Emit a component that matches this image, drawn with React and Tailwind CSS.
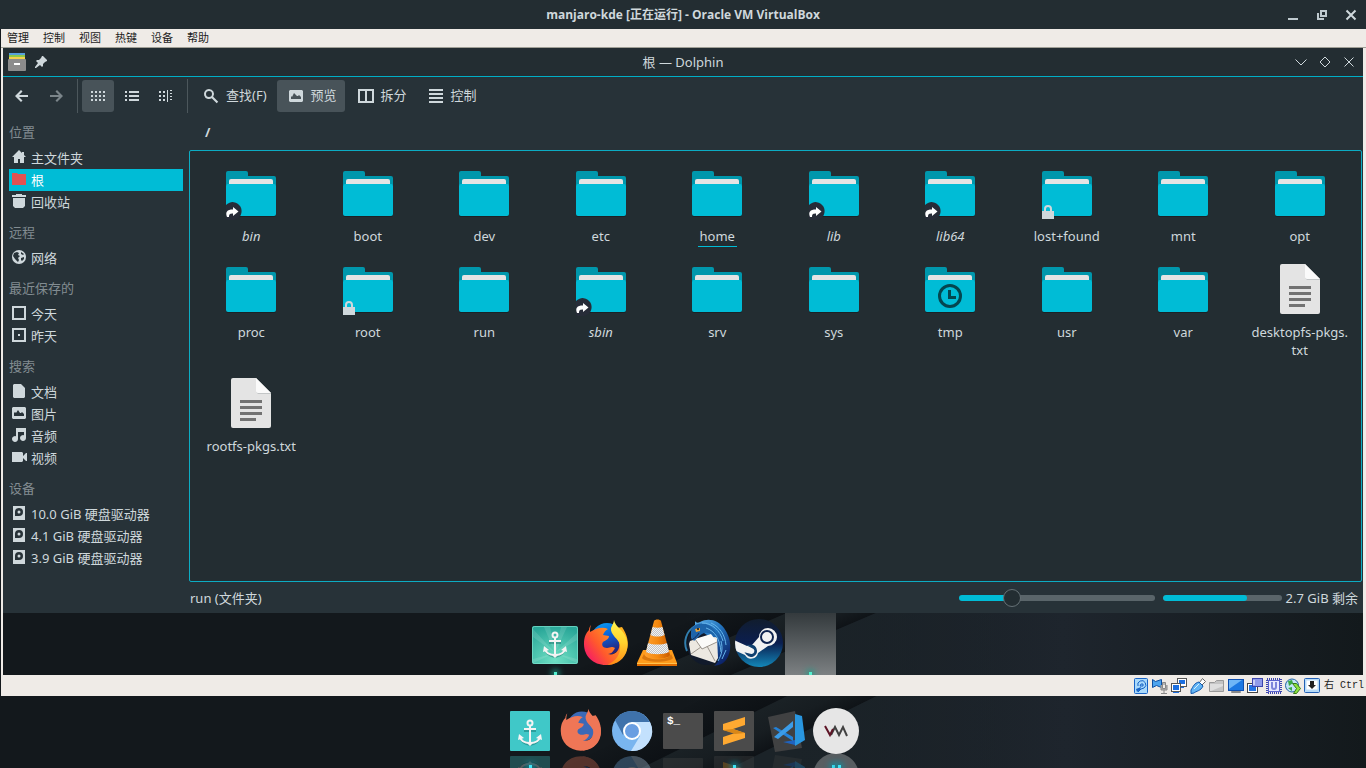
import { useState } from "react";

const folders = [
  { name: "bin", link: true },
  { name: "boot" },
  { name: "dev" },
  { name: "etc" },
  { name: "home", current: true },
  { name: "lib", link: true },
  { name: "lib64", link: true },
  { name: "lost+found", locked: true },
  { name: "mnt" },
  { name: "opt" },
  { name: "proc" },
  { name: "root", locked: true },
  { name: "run" },
  { name: "sbin", link: true },
  { name: "srv" },
  { name: "sys" },
  { name: "tmp", clock: true },
  { name: "usr" },
  { name: "var" },
  { name: "desktopfs-pkgs.txt", file: true },
  { name: "rootfs-pkgs.txt", file: true },
];

const places = [
  {
    title: "位置",
    items: [
      { label: "主文件夹", icon: "home" },
      { label: "根", icon: "root", active: true },
      { label: "回收站", icon: "trash" },
    ],
  },
  { title: "远程", items: [{ label: "网络", icon: "globe" }] },
  {
    title: "最近保存的",
    items: [
      { label: "今天", icon: "today" },
      { label: "昨天", icon: "yesterday" },
    ],
  },
  {
    title: "搜索",
    items: [
      { label: "文档", icon: "document" },
      { label: "图片", icon: "image" },
      { label: "音频", icon: "audio" },
      { label: "视频", icon: "video" },
    ],
  },
  {
    title: "设备",
    items: [
      { label: "10.0 GiB 硬盘驱动器", icon: "disk" },
      { label: "4.1 GiB 硬盘驱动器", icon: "disk" },
      { label: "3.9 GiB 硬盘驱动器", icon: "disk" },
    ],
  },
];

const placeIcons = {
  home: <path d="M8 1L1 8h2v6h4v-4h2v4h4V8h2L13 6V3h-2v1z" />,
  root: <path fill="#e25252" d="M1 2h5l1 1h8v11H1z" />,
  trash: <path d="M5 1h6v1h4v2H1V2h4zM2 5h12v8l-2 2H4l-2-2z" />,
  globe: (
    <>
      <circle cx="8" cy="8" r="7" />
      <path
        fill="#273238"
        d="M3 4l3-1 2 1-1 2 2 1-2 2 1 2-1 2-3-3-2-3zM10 3l3 2-1 1-2-1zM10 9l3-1v2l-2 2-1-1z"
      />
    </>
  ),
  today: <path fillRule="evenodd" d="M1 1h14v14H1zM3 3v10h10V3z" />,
  yesterday: <path fillRule="evenodd" d="M1 1h14v14H1zM3 3v10h10V3zM7 7h2v2H7z" />,
  document: <path d="M2 2l1-1h7l4 4v9l-1 1H3l-1-1z" />,
  image: (
    <path
      fillRule="evenodd"
      d="M2 2h12l1 1v10l-1 1H2l-1-1V3zM3 11h10V9l-2-2-1 1-1 0-2-3-2 3-1-1-1 1z"
    />
  ),
  audio: <path d="M5 1h10v10a3 3 0 1 1-2-2.8V5H7v7a3 3 0 1 1-2-2.8z" />,
  video: <path d="M1 3h10l1 1v3l3-3h1v8h-1l-3-3v3l-1 1H1z" />,
  disk: (
    <path
      fillRule="evenodd"
      d="M2 1h12v14H2zM8 3a4 4 0 0 0-4 4v4h4a4 4 0 0 0 0-8zM8 5.500a1.500 1.500 0 1 1 0 3 1.500 1.500 0 0 1 0-3z"
    />
  ),
};

function FolderIcon({ link, locked, clock }) {
  return (
    <svg viewBox="0 0 64 64" className="h-16 w-16" aria-hidden="true">
      <path fill="#0097ac" d="M7 12a2 2 0 0 1 2-2h18a2 2 0 0 1 2 2v3h26a2 2 0 0 1 2 2v20H7z" />
      <path fill="#e4e4e4" d="M10 20a2 2 0 0 1 2-2h40a2 2 0 0 1 2 2v8H10z" />
      <rect x="7" y="24" width="50" height="32" rx="2" fill="#1a2226" />
      <rect x="7" y="23" width="50" height="32" rx="2" fill="#00bcd6" />
      {clock && (
        <>
          <circle cx="32" cy="39" r="10.500" fill="none" stroke="#04464f" strokeWidth="3" />
          <path d="M31.500 33v7.500H38" fill="none" stroke="#04464f" strokeWidth="3" />
        </>
      )}
      {link && (
        <>
          <path fill="#272c38" d="M7 44a9 9 0 1 1 8 15H9l-2-1z" />
          <path
            fill="#fff"
            d="M14 46l5.500 4.500L14 55v-2.500c-3 0-4 .5-4 3.500H8c-2-5 0-7.500 6-7.500z"
          />
        </>
      )}
      {locked && (
        <path
          fill="#cfd8dc"
          fillRule="evenodd"
          d="M7 50h2v-2a4 4 0 0 1 8 0v2h2v8H7zM11 50h4v-2a2 2 0 0 0-4 0z"
        />
      )}
    </svg>
  );
}

function TextFileIcon() {
  return (
    <svg viewBox="0 0 64 64" className="h-16 w-16" aria-hidden="true">
      <path fill="#e4e4e4" d="M12 9a2 2 0 0 1 2-2h23l15 15v33a2 2 0 0 1-2 2H14a2 2 0 0 1-2-2z" />
      <path fill="#c3c6c7" d="M37 21l2 2h13v-1z" />
      <path fill="#fafafa" d="M37 7l15 15H39a2 2 0 0 1-2-2z" />
      <path fill="#727272" d="M21 29h22v3H21zM21 35h22v3H21zM21 41h22v3H21zM21 47h16v3H21z" />
    </svg>
  );
}

function Anchor({ x, y }) {
  return (
    <g transform={`translate(${x} ${y})`}>
      <path
        fill="none"
        stroke="#0b5e5a"
        strokeOpacity=".4"
        strokeWidth="2"
        d="M0 -5v18M-6 0h12M-10 6c1 5 5 7 10 8c5-1 9-3 10-8"
      />
      <circle cy="-8" r="2.500" fill="none" stroke="#f4f4f4" strokeWidth="2" />
      <path fill="none" stroke="#f4f4f4" strokeWidth="2" d="M0 -5v17M-6 -2h12M-10 6c1 4 5 6 10 6c5 0 9-2 10-6" />
      <path fill="#f4f4f4" d="M-12 9l1-6 5 4zM12 9l-1-6-5 4zM-3 12h6l-3 3z" />
    </g>
  );
}

function FirefoxShape({ body, flame, globe }) {
  return (
    <>
      <circle cx="26" cy="22" r="16" fill={globe} />
      <path
        fill={body}
        d="M10 8C9 11 9 13 9 15C14 12 21 9 27 12C25 13 23 15 22 18L28 19C28 22 25 23 22 25C20 28 22 31 26 31C29 31 30 29 34 31C33 33 31 37 27 37C33 39 40 34 38 25C37 20 32 18 31 12L41 10C46 17 48 25 46 32C43 42 35 48 25 48C12 48 3 39 3 27C3 20 5 16 8 13C8 11 9 9 10 8z"
      />
      <path
        fill={flame}
        d="M33 3C34 7 36 9 41 14C47 21 48 29 45 36C41 45 32 48 26 48C36 44 40 36 39 28C38 22 29 18 30 11C31 8 33 6 33 3z"
      />
    </>
  );
}

function GuestAnchor() {
  return (
    <svg viewBox="0 0 51 51" className="h-[51px] w-[51px]" aria-hidden="true">
      <defs>
        <radialGradient id="guest-anchor" cx=".5" cy=".9" r=".9">
          <stop offset="0" stopColor="#6fe0c4" />
          <stop offset="1" stopColor="#29a698" />
        </radialGradient>
      </defs>
      <rect x="2" y="9" width="46" height="38" rx="2" fill="url(#guest-anchor)" />
      <path
        fill="#fff"
        fillOpacity=".12"
        d="M25 36L3 12v8zM25 36L14 10h6zM25 36L31 10h6zM25 36L47 16v7zM25 36L3 42v4zM25 36l22 6v4z"
      />
      <rect x="2.500" y="9.500" width="45" height="37" rx="2" fill="none" stroke="#7fe3cf" strokeOpacity=".7" />
      <Anchor x={25} y={26} />
    </svg>
  );
}

function GuestFirefox() {
  return (
    <svg viewBox="0 0 51 51" className="h-[51px] w-[51px]" aria-hidden="true">
      <defs>
        <linearGradient id="fox-body" x1="0" y1=".8" x2=".9" y2=".2">
          <stop offset="0" stopColor="#f5156c" />
          <stop offset=".4" stopColor="#ff5a2c" />
          <stop offset="1" stopColor="#ffb01f" />
        </linearGradient>
        <linearGradient id="fox-flame" x1="0" y1="0" x2="0" y2="1">
          <stop offset="0" stopColor="#fff44f" />
          <stop offset=".5" stopColor="#ffd22e" />
          <stop offset="1" stopColor="#ff8a16" />
        </linearGradient>
        <linearGradient id="fox-globe" x1="0" y1="0" x2=".3" y2="1">
          <stop offset="0" stopColor="#0aa5f5" />
          <stop offset=".5" stopColor="#0a5fd8" />
          <stop offset="1" stopColor="#27247b" />
        </linearGradient>
      </defs>
      <FirefoxShape body="url(#fox-body)" flame="url(#fox-flame)" globe="url(#fox-globe)" />
    </svg>
  );
}

function GuestVlc() {
  return (
    <svg viewBox="0 0 51 51" className="h-[51px] w-[51px]" aria-hidden="true">
      <defs>
        <linearGradient id="vlc-orange">
          <stop offset="0" stopColor="#ffa030" />
          <stop offset=".5" stopColor="#f58a10" />
          <stop offset="1" stopColor="#c85a00" />
        </linearGradient>
        <pattern id="vlc-check" width="2" height="2" patternUnits="userSpaceOnUse">
          <rect width="2" height="2" fill="#f3f3f3" />
          <path fill="#c2c4c6" d="M0 0h1v1H0zM1 1h1v1H1z" />
        </pattern>
      </defs>
      <path fill="#ff9c1c" d="M11 33h29l5 13H5z" />
      <path fill="#ffc24d" d="M5 46h40v1H5z" />
      <path fill="#e06c00" d="M5 47h40v2H5z" />
      <path fill="#b85400" fillOpacity=".5" d="M12 37c2 7 25 7 27 0l2 4c-4 5-27 5-31 0z" />
      <path fill="url(#vlc-orange)" d="M22 4c1-2 6-2 7 0l9 34c-2 5-23 5-25 0z" />
      <path fill="url(#vlc-check)" d="M20.500 10c3 1 7 1 10 0l2 8c-4 2-10 2-14 0zM16 26c5 2 14 2 19 0l2 9c-6 3-17 3-23 0z" />
    </svg>
  );
}

function GuestThunderbird() {
  return (
    <svg viewBox="0 0 51 51" className="h-[51px] w-[51px]" aria-hidden="true">
      <defs>
        <linearGradient id="bird" x1="0" y1="0" x2=".7" y2="1">
          <stop offset="0" stopColor="#63b6ef" />
          <stop offset=".45" stopColor="#2273bd" />
          <stop offset="1" stopColor="#0c2369" />
        </linearGradient>
      </defs>
      <circle cx="24" cy="28" r="20" fill="#111a2b" />
      <path fill="none" stroke="#317eae" strokeWidth="2" d="M12 9C3 14 0 25 4 34" />
      <path
        fill="url(#bird)"
        d="M12 4c1 2 3 2 5 1C26 0 36 4 41 11c8 11 8 24 2 32c-3 4-7 5-12 6c3-3 5-5 5-8l-6 4c4-8 5-15 3-21l-15-10c-5 1-7 5-9 9c-2-6 0-12 3-15z"
      />
      <path fill="#ece8e1" d="M7 24l9-3 18-1 1 21-3 5L8 38l-2-11z" />
      <path fill="#fbfaf8" d="M12 22l16-5 6 8-15 7z" />
      <path fill="none" stroke="#9b948c" strokeWidth="1" d="M12 22l7 10 15-7M8 37l10-7M32 44l-8-15" />
      <path fill="#1d64aa" d="M9 11c5-6 15-6 22 1l5 11c-6-6-12-9-17-6c-3 2-5 4-8 7c-3-4-4-8-2-13z" />
      <path
        fill="none"
        stroke="#66b4ea"
        strokeWidth="1"
        d="M19 6c10 0 18 7 21 18M28 6c9 4 14 12 15 22M23 11c9 3 14 11 15 24M43 33l-4 9M38 24c2 8 1 13-3 20"
      />
      <path fill="#e7a33c" d="M12 12l5-1 0 3-4 1z" />
      <circle cx="15" cy="12" r="1" fill="#111" />
      <path fill="none" stroke="#172653" strokeWidth="1" d="M10 22c2-1 4-3 6-6" />
    </svg>
  );
}

function GuestSteam() {
  return (
    <svg viewBox="0 0 51 51" className="h-[51px] w-[51px]" aria-hidden="true">
      <defs>
        <linearGradient id="steam" x1="0" y1="0" x2="0" y2="1">
          <stop offset="0" stopColor="#111d2e" />
          <stop offset=".5" stopColor="#0b1e4f" />
          <stop offset="1" stopColor="#1387b8" />
        </linearGradient>
        <clipPath id="steam-clip">
          <circle cx="25" cy="26" r="24" />
        </clipPath>
      </defs>
      <circle cx="25" cy="26" r="24" fill="url(#steam)" />
      <g clipPath="url(#steam-clip)">
        <path fill="#f2f2f2" d="M0 23l13 6c2-1 4-1 5-1l7-8a9 9 0 1 1 9 9l-10 7a7 7 0 0 1-13 2L0 33z" />
        <circle cx="33" cy="20" r="6" fill="none" stroke="#10244f" strokeWidth="2" />
        <path fill="none" stroke="#10406f" strokeWidth="2" d="M13 37a5 5 0 1 0 3-8l4 2a4 4 0 0 1-3 7z" />
      </g>
    </svg>
  );
}

function HostAnchor() {
  return (
    <svg viewBox="0 0 51 51" className="h-[51px] w-[51px]" aria-hidden="true">
      <rect x="6" y="5" width="40" height="40" rx="1" fill="#40c8c8" />
      <Anchor x={26} y={25} />
    </svg>
  );
}

function HostFirefox() {
  return (
    <svg viewBox="0 0 51 51" className="h-[51px] w-[51px]" aria-hidden="true">
      <g transform="translate(3 0) scale(.92 .93)">
        <FirefoxShape body="#ef7656" flame="#ef7656" globe="#3b69b7" />
      </g>
    </svg>
  );
}

function HostChromium() {
  return (
    <svg viewBox="0 0 51 51" className="h-[51px] w-[51px]" aria-hidden="true">
      <circle cx="26" cy="25" r="20" fill="#79b5ef" />
      <path fill="#3f72ab" d="M9 14a20 20 0 0 1 34 1l1 1H26l-9 13z" />
      <path fill="#c3e1fd" d="M26 16h18a20 20 0 0 1-19 29l9-15z" />
      <circle cx="26" cy="25" r="9" fill="#fff" />
      <circle cx="26" cy="25" r="7" fill="#699ee2" />
    </svg>
  );
}

function HostTerminal({ prompt }) {
  return (
    <svg viewBox="0 0 51 51" className="h-[51px] w-[51px]" aria-hidden="true">
      <rect x="6" y="7" width="40" height="36" rx="1" fill="#4b4b4b" />
      {prompt && (
        <text x="10" y="18" fontSize="11" fontWeight="700" fill="#fff" fontFamily="Liberation Mono, monospace">
          {prompt}
        </text>
      )}
    </svg>
  );
}

function HostSublime() {
  return (
    <svg viewBox="0 0 51 51" className="h-[51px] w-[51px]" aria-hidden="true">
      <rect x="6" y="5" width="40" height="40" rx="1" fill="#4b4b4b" />
      <path fill="#ffa931" d="M15 18l22-7v8l-12 4 12 4v5l-22 7v-8l12-4-12-3z" />
      <path fill="#d98718" d="M15 24l10-1 12 4-10 1z" />
    </svg>
  );
}

function HostCode() {
  return (
    <svg viewBox="0 0 51 51" className="h-[51px] w-[51px]" aria-hidden="true">
      <path fill="#404142" d="M9 11l27-6 7 37-27 4z" />
      <path fill="#2996df" d="M36 8l7 2 3 24-10 6z" />
      <path fill="#1f63c0" d="M24 36l12-2v5z" />
      <path fill="#2382d8" d="M14 22l3-1 17 10v4z" />
      <path fill="#3b9ce8" d="M34 15v6L19 33l-4-2z" />
    </svg>
  );
}

function HostVm() {
  return (
    <svg viewBox="0 0 51 51" className="h-[51px] w-[51px]" aria-hidden="true">
      <circle cx="26" cy="25" r="23" fill="#e6e6e6" />
      <path fill="none" stroke="#414141" strokeWidth="2" d="M21 29l4-8 4 8 4-8 4 9" />
      <path fill="none" stroke="#5e1426" strokeWidth="2" d="M15 20l5 9 3-6" />
    </svg>
  );
}

const guestDock = [
  { name: "Manjaro Hello", icon: <GuestAnchor />, running: true },
  { name: "Firefox", icon: <GuestFirefox /> },
  { name: "VLC", icon: <GuestVlc /> },
  { name: "Thunderbird", icon: <GuestThunderbird /> },
  { name: "Steam", icon: <GuestSteam /> },
  { name: "Dolphin", icon: null, running: true, active: true },
];

const hostDock = [
  { name: "Dock", icon: <HostAnchor />, windows: 1 },
  { name: "Firefox", icon: <HostFirefox />, windows: 0 },
  { name: "Chromium", icon: <HostChromium />, windows: 0 },
  { name: "Terminal", icon: <HostTerminal prompt="$_" />, reflection: <HostTerminal />, windows: 0 },
  { name: "Sublime Text", icon: <HostSublime />, windows: 1 },
  { name: "Visual Studio Code", icon: <HostCode />, windows: 0 },
  { name: "VMware", icon: <HostVm />, windows: 2 },
];

const vmIndicators = [
  {
    name: "硬盘",
    icon: (
      <>
        <rect x="1.500" y=".5" width="13" height="15" rx="1" fill="#a9d9fb" stroke="#1763c6" />
        <path fill="none" stroke="#1763c6" d="M5 8a4 4 0 1 1 6 2l-3 1-3 3M8 6h2v2H7z" />
        <path fill="#1763c6" d="M3 11l5-2-1 3-3 2z" />
      </>
    ),
  },
  {
    name: "声音",
    icon: (
      <>
        <path fill="#4da4ee" stroke="#0e4fa2" d="M.5 1.500l3 2 6-2v8l-5-2-4 2z" />
        <path fill="#b5b5b5" stroke="#888" d="M10.500 4.500h3v6h-3zM9 7v5h6V7M12 12v3M9 15.500h6" />
      </>
    ),
  },
  {
    name: "网络",
    icon: (
      <>
        <rect x="6.500" y=".5" width="9" height="8" fill="#fff" stroke="#555" />
        <path fill="#1c6fe0" d="M8 2h6v4H8zM9 9h4v1H9z" />
        <rect x=".5" y="5.500" width="9" height="8" fill="#fff" stroke="#555" />
        <path fill="#1c6fe0" d="M2 7h6v5H2zM2 14h6v1H2z" />
      </>
    ),
  },
  {
    name: "USB",
    icon: (
      <>
        <path fill="#fff" stroke="#666" d="M9.500 4.500l3-4 3 3-4 4z" />
        <path fill="#63b5f4" stroke="#0e56ad" d="M9 4l4 4c-2 5-7 5-9 7l-3 .500L1 12C3 9 4 5 9 4z" />
        <path stroke="#d6efff" d="M4 11l5-5" />
      </>
    ),
  },
  {
    name: "共享文件夹",
    icon: (
      <>
        <path fill="#c4c4c4" stroke="#999" d="M.5 4.500h5l2-2h7v11H.5z" />
        <path fill="#dedede" d="M1 6h13v2L2 13H1z" />
      </>
    ),
  },
  {
    name: "显示",
    icon: (
      <>
        <rect x=".5" y="1.500" width="15" height="11" fill="#1c78e2" stroke="#0e4fb0" />
        <path fill="#6fb6f7" d="M1 2h13L1 11z" />
        <path fill="#ddd" stroke="#888" d="M3.500 13.500h9v1h-9z" />
      </>
    ),
  },
  {
    name: "录像",
    icon: (
      <>
        <rect x=".5" y="5.500" width="10" height="9" fill="#fff" stroke="#444" />
        <path fill="#2474e3" d="M2 7h7v6H2z" />
        <rect x="5.500" y=".5" width="10" height="8" fill="#8f9ae9" stroke="#3d46ad" />
        <path fill="none" stroke="#fff" d="M7 2v5" />
      </>
    ),
  },
  {
    name: "虚拟化",
    icon: (
      <>
        <rect x="1" y="1" width="14" height="14" fill="none" stroke="#3d46ad" strokeWidth="2" strokeDasharray="1 1" />
        <rect x="2.500" y="2.500" width="11" height="11" fill="#e7e9ff" stroke="#5a63cc" />
        <path fill="none" stroke="#7d86da" strokeWidth="2" d="M6 4v5a2 2 0 0 0 4 0V4" />
      </>
    ),
  },
  {
    name: "鼠标集成",
    icon: (
      <>
        <circle cx="7" cy="7.500" r="6.500" fill="#c3e5f8" stroke="#2164a8" />
        <path fill="#39a846" d="M3 3l4-1 1 3-4 3zM3 10l4-1v4z" />
        <path fill="#8ee23e" stroke="#35781c" d="M7.500 5.500h4l4 5-4 5h-3l3-5z" />
      </>
    ),
  },
  {
    name: "键盘",
    icon: (
      <>
        <rect x=".5" y=".5" width="15" height="14" rx="1" fill="#b7dbf8" stroke="#2360b5" />
        <rect x="2.500" y="2.500" width="11" height="9" fill="#fff" />
        <path fill="#222" d="M6 3h4v4h2l-4 4-4-4h2z" />
      </>
    ),
  },
];

function Wallpaper({ id, children }) {
  return (
    <div className="relative overflow-hidden bg-[#14191d]">
      <svg
        viewBox="0 0 1360 72"
        preserveAspectRatio="none"
        className="absolute inset-0 h-full w-full"
        aria-hidden="true"
      >
        <defs>
          <linearGradient id={id}>
            <stop offset=".5" stopColor="#13181c" />
            <stop offset=".78" stopColor="#1e252d" />
            <stop offset="1" stopColor="#13191c" />
          </linearGradient>
          <linearGradient id={`${id}-a`} gradientUnits="userSpaceOnUse" x1="682" y1="8" x2="699" y2="43">
            <stop offset="0" stopColor="#13181c" />
            <stop offset="1" stopColor="#0d1115" />
          </linearGradient>
          <linearGradient id={`${id}-b`} gradientUnits="userSpaceOnUse" x1="700" y1="43" x2="717" y2="78">
            <stop offset="0" stopColor="#1a2125" />
            <stop offset=".5" stopColor="#171d21" />
            <stop offset="1" stopColor="#0e1216" />
          </linearGradient>
          <linearGradient id={`${id}-c`} gradientUnits="userSpaceOnUse" x1="790" y1="0" x2="1080" y2="0">
            <stop offset="0" stopColor="#1b2328" />
            <stop offset="1" stopColor="#1d252c" stopOpacity="0" />
          </linearGradient>
        </defs>
        <rect width="1360" height="72" fill={`url(#${id})`} />
        <path fill={`url(#${id}-a)`} d="M560 72L705 0h79L639 72z" />
        <path fill={`url(#${id}-b)`} d="M639 72L784 0h89L728 72z" />
        <path fill={`url(#${id}-c)`} d="M728 72L873 0h210v72z" />
      </svg>
      <div className="relative h-full">{children}</div>
    </div>
  );
}

function ToolIcon({ children, dim }) {
  return (
    <svg
      viewBox="0 0 22 22"
      aria-hidden="true"
      className={dim ? "h-[22px] w-[22px] text-[#7b858a]" : "h-[22px] w-[22px] text-[#cfd8dc]"}
      fill="currentColor"
    >
      {children}
    </svg>
  );
}

function ToolButton({ label, text, active, disabled, children }) {
  return (
    <button
      type="button"
      aria-label={label}
      disabled={disabled}
      className={`flex h-8 items-center gap-1 rounded-[3px] ${text ? "px-2" : "px-[5px]"} ${
        active ? "bg-[#485359]" : ""
      }`}
    >
      <ToolIcon dim={disabled}>{children}</ToolIcon>
      {text}
    </button>
  );
}

function Separator() {
  return (
    <div className="h-[34px] w-[6px] pl-[3px]">
      <div className="h-full w-px bg-[#4c575c]" />
    </div>
  );
}

function Toolbar() {
  return (
    <div className="flex h-9 items-center gap-[2px] pl-[3px] pt-[2px]">
      <ToolButton label="后退">
        <path d="M10 5l1.500 1.500L8 10h9v2H8l3.500 3.500L10 17l-6-6z" />
      </ToolButton>
      <ToolButton label="前进" disabled>
        <path d="M12 5l-1.500 1.500L14 10H5v2h9l-3.500 3.500L12 17l6-6z" />
      </ToolButton>
      <Separator />
      <ToolButton label="图标" active>
        {[6, 10, 14].map((y) => (
          <path key={y} d={`M4 ${y}h2v2H4zM8 ${y}h2v2H8zM12 ${y}h2v2h-2zM16 ${y}h2v2h-2z`} />
        ))}
      </ToolButton>
      <ToolButton label="紧凑">
        <path d="M4 6h2v2H4zM8 6h10v2H8zM4 10h2v2H4zM8 10h10v2H8zM4 14h2v2H4zM8 14h10v2H8z" />
      </ToolButton>
      <ToolButton label="细节">
        <path d="M4 6h2v2H4zM8 6h2v2H8zM4 10h2v2H4zM8 10h2v2H8zM4 14h2v2H4zM8 14h2v2H8zM12 5h1v12h-1zM15 5h2v1h-2zM15 8h2v1h-2zM15 11h2v1h-2zM15 14h2v1h-2z" />
      </ToolButton>
      <Separator />
      <ToolButton text="查找(F)">
        <path
          fillRule="evenodd"
          d="M9 4a5 5 0 0 1 4.200 7.700l5 5-1.500 1.500-5-5A5 5 0 1 1 9 4zM9 6a3 3 0 1 0 0 6 3 3 0 0 0 0-6z"
        />
      </ToolButton>
      <ToolButton text="预览" active>
        <path
          fillRule="evenodd"
          d="M5 5h12l1 1v10l-1 1H5l-1-1V6zM6 14h10v-2l-2-2-1 1h-1L9 8l-2 4-1-1z"
        />
      </ToolButton>
      <ToolButton text="拆分">
        <path fillRule="evenodd" d="M3 4h16v14H3zM5 6v10h5V6zM12 6v10h5V6z" />
      </ToolButton>
      <ToolButton text="控制">
        <path d="M4 4h14v2H4zM4 8h14v2H4zM4 12h14v2H4zM4 16h14v2H4z" />
      </ToolButton>
    </div>
  );
}

function PlacesPanel() {
  return (
    <nav className="w-[180px] shrink-0 pl-[6px]">
      {places.map((section) => (
        <section key={section.title}>
          <h2 className="pb-1 pt-2 leading-[22px] text-[#828c91]">{section.title}</h2>
          {section.items.map((item) => (
            <a
              key={item.label}
              href="#"
              className={`flex h-[22px] items-center gap-1 pl-[2px] leading-[22px] ${
                item.active ? "bg-[#00bcd6] text-white" : ""
              }`}
            >
              <svg
                viewBox="0 0 16 16"
                className="mb-[2px] h-4 w-4 shrink-0 fill-[#cfd8dc]"
                aria-hidden="true"
              >
                {placeIcons[item.icon]}
              </svg>
              {item.label}
            </a>
          ))}
        </section>
      ))}
    </nav>
  );
}

function FileGrid() {
  return (
    <div className="flex-1 rounded-[2px] border border-[#0cacc3] bg-[#232d32] px-[3px] pt-[10px]">
      <div className="grid grid-cols-10 gap-y-3">
        {folders.map((item) => (
          <button
            key={item.name}
            type="button"
            className="flex flex-col items-center gap-[2px] px-1 leading-[18px]"
          >
            {item.file ? (
              <TextFileIcon />
            ) : (
              <FolderIcon link={item.link} locked={item.locked} clock={item.clock} />
            )}
            {item.name === "desktopfs-pkgs.txt" ? (
              <span>
                desktopfs-pkgs.
                <wbr />
                txt
              </span>
            ) : (
              <span
                className={`${item.link ? "italic" : ""} ${
                  item.current ? "-mb-[2px] h-5 border-b border-[#00bcd6] px-[2px]" : ""
                }`}
              >
                {item.name}
              </span>
            )}
          </button>
        ))}
      </div>
    </div>
  );
}

function Dolphin() {
  const [zoom, setZoom] = useState(25);
  const used = 71;

  return (
    <section className="flex flex-1 flex-col bg-[#273238]">
      <header className="grid h-[29px] grid-cols-[1fr_auto_1fr] items-center border-b border-[#00aec6] bg-[#232d32]">
        <div className="flex items-center gap-2 pl-[5px]">
          <svg viewBox="0 0 18 18" className="h-[18px] w-[18px]" aria-hidden="true">
            <path fill="#57a0dc" d="M1 0h16v2H1z" />
            <path fill="#8cc84b" d="M1 2h16v2H1z" />
            <path fill="#f5d04c" d="M1 4h16v2H1z" />
            <rect y="6" width="18" height="12" rx="1" fill="#8c8c8c" />
            <path fill="#fff" d="M6 10h6v2H6z" />
          </svg>
          <button type="button" aria-label="固定">
            <svg viewBox="0 0 14 14" className="h-[14px] w-[14px] fill-[#cfd8dc]" aria-hidden="true">
              <path d="M9 1l4 4v1l-2 1-2 2v2l-1 1-2-2-4 3-1 0 0-1 3-4-2-2 1-1h2l2-2 1-2z" />
            </svg>
          </button>
        </div>
        <h1 className="pt-[2px]">根 — Dolphin</h1>
        <div className="flex justify-end gap-[10px] pr-[7px]">
          <button type="button" aria-label="最小化">
            <svg viewBox="0 0 14 14" className="h-[14px] w-[14px] fill-none stroke-[#cfd8dc]">
              <path d="M1.500 4.500L7 10l5.500-5.500" />
            </svg>
          </button>
          <button type="button" aria-label="最大化">
            <svg viewBox="0 0 14 14" className="h-[14px] w-[14px] fill-none stroke-[#cfd8dc]">
              <path d="M7 2l5 5-5 5-5-5z" />
            </svg>
          </button>
          <button type="button" aria-label="关闭">
            <svg viewBox="0 0 14 14" className="h-[14px] w-[14px] fill-none stroke-[#cfd8dc]">
              <path d="M2.500 2.500l9 9M11.500 2.500l-9 9" />
            </svg>
          </button>
        </div>
      </header>

      <Toolbar />

      <div className="flex flex-1 gap-[6px]">
        <PlacesPanel />
        <main className="flex min-w-0 flex-1 flex-col pr-px">
          <div className="flex h-[37px] items-center pl-4 pt-[2px] font-bold">/</div>
          <FileGrid />
          <footer className="flex h-[31px] items-center pr-1">
            <span className="flex-1 pl-px pt-[2px]">run (文件夹)</span>
            <input
              type="range"
              min="0"
              max="100"
              value={zoom}
              onChange={(e) => setZoom(Number(e.target.value))}
              aria-label="缩放"
              style={{ "--fill": `${zoom}%` }}
              className="mr-2 h-[18px] w-[196px] appearance-none bg-transparent [&::-webkit-slider-runnable-track]:h-[6px] [&::-webkit-slider-runnable-track]:rounded-full [&::-webkit-slider-runnable-track]:bg-[linear-gradient(to_right,#00bcd6_var(--fill),#5a656a_var(--fill))] [&::-webkit-slider-thumb]:-mt-[6px] [&::-webkit-slider-thumb]:h-[18px] [&::-webkit-slider-thumb]:w-[18px] [&::-webkit-slider-thumb]:appearance-none [&::-webkit-slider-thumb]:rounded-full [&::-webkit-slider-thumb]:border [&::-webkit-slider-thumb]:border-[#667176] [&::-webkit-slider-thumb]:bg-[#232d32]"
            />
            <div className="mr-1 h-[6px] w-[119px] overflow-hidden rounded-full bg-[#5a656a]">
              <div className="h-full rounded-full bg-[#00bcd6]" style={{ width: `${used}%` }} />
            </div>
            <span className="pt-[2px]">2.7 GiB 剩余</span>
          </footer>
        </main>
      </div>
    </section>
  );
}

function GuestDock() {
  return (
    <Wallpaper id="guest-wall">
      <div className="flex h-[62px] justify-center">
        {guestDock.map((app) => (
          <button
            key={app.name}
            type="button"
            aria-label={app.name}
            className={`relative flex h-full w-[51px] items-start pt-1 ${
              app.active ? "bg-linear-to-b from-[#343a3d] to-[#7d8183]" : ""
            }`}
          >
            {app.icon}
            {app.running && (
              <span className="absolute bottom-0 left-6 h-[3px] w-[3px] bg-[#54f0cf] shadow-[0_0_6px_2px_#1f9c88]" />
            )}
          </button>
        ))}
      </div>
    </Wallpaper>
  );
}

function HostDock() {
  return (
    <Wallpaper id="host-wall">
      <div className="flex h-[72px] justify-center overflow-hidden pr-px pt-[10px]">
        {hostDock.map((app) => (
          <button
            key={app.name}
            type="button"
            aria-label={app.name}
            className="relative flex h-[62px] w-[51px] flex-col"
          >
            <span className="block shrink-0">{app.icon}</span>
            <span className="-mt-[7px] block shrink-0 -scale-y-100 opacity-30">
              {app.reflection || app.icon}
            </span>
            <span className="absolute bottom-0 left-0 flex w-[52px] justify-center gap-[3px]">
              {Array.from({ length: app.windows }, (_, i) => (
                <span key={i} className="h-[3px] w-[3px] bg-[#3fe3f5] shadow-[0_0_6px_2px_#118fa0]" />
              ))}
            </span>
          </button>
        ))}
      </div>
    </Wallpaper>
  );
}

export default function App() {
  return (
    <div className="flex min-h-screen flex-col bg-[#14191d] font-['Noto_Sans','Noto_Sans_CJK_SC',sans-serif] text-[13px] text-[#cfd8dc]">
      <header className="grid h-[29px] grid-cols-[1fr_auto_1fr] items-center bg-[#232d32]">
        <h1 className="col-start-2 font-['Open_Sans','Noto_Sans_CJK_SC',sans-serif] text-[12px] font-bold">
          manjaro-kde [正在运行] - Oracle VM VirtualBox
        </h1>
        <div className="flex justify-end gap-[17px] pr-[9px]">
          <button type="button" aria-label="最小化">
            <svg viewBox="0 0 12 12" className="h-3 w-3 fill-[#bfcacf]">
              <path d="M1 9h10v2H1z" />
            </svg>
          </button>
          <button type="button" aria-label="还原">
            <svg viewBox="0 0 12 12" className="h-3 w-3 fill-[#bfcacf]">
              <path fillRule="evenodd" d="M4 1h7v7H4zM6 3v3h3V3zM1 4h2v5h5v2H1z" />
            </svg>
          </button>
          <button type="button" aria-label="关闭">
            <svg viewBox="0 0 12 12" className="h-3 w-3 fill-none stroke-[#cfd8dc] stroke-2">
              <path d="M1.500 1.500l9 9M10.500 1.500l-9 9" />
            </svg>
          </button>
        </div>
      </header>

      <div className="flex flex-1 flex-col border-l border-[#14191d] bg-[#efebe7]">
        <nav className="flex h-[19px] gap-[14px] border-b border-[#a09f96] pl-[6px] font-['Liberation_Serif','Noto_Sans_CJK_SC',serif] text-[11px] leading-[18px] text-[#1c1c1c]">
          {["管理", "控制", "视图", "热键", "设备", "帮助"].map((menu) => (
            <button key={menu} type="button">
              {menu}
            </button>
          ))}
        </nav>

        <div className="flex flex-1 flex-col pl-[2px] pr-[3px]">
          <Dolphin />
          <GuestDock />
        </div>

        <footer className="flex h-[21px] items-center justify-end gap-[3px] pr-[2px]">
          {vmIndicators.map((item) => (
            <button key={item.name} type="button" aria-label={item.name}>
              <svg viewBox="0 0 16 16" className="h-4 w-4" aria-hidden="true">
                {item.icon}
              </svg>
            </button>
          ))}
          <span className="pl-px font-['Liberation_Mono','Noto_Sans_CJK_SC',monospace] text-[10px] text-[#222]">
            右 Ctrl
          </span>
        </footer>
      </div>

      <HostDock />
    </div>
  );
}
